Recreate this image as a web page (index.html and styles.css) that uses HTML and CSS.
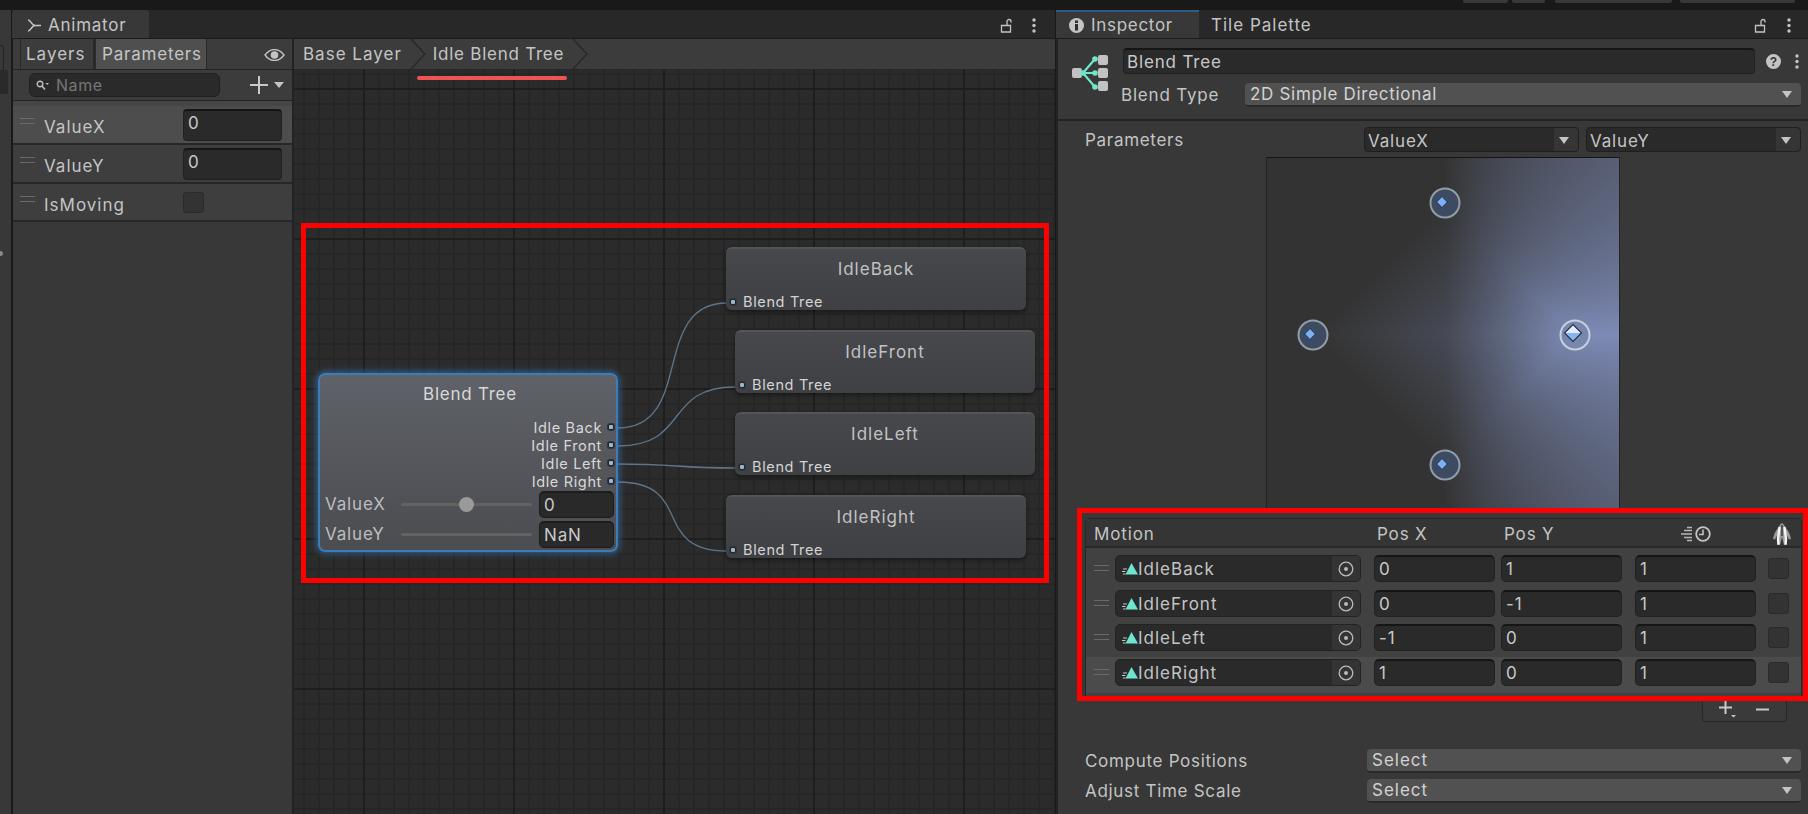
FILE: index.html
```html
<!DOCTYPE html>
<html lang="en">
<head>
<meta charset="utf-8">
<title>Animator and Inspector</title>
<link rel="stylesheet" href="styles.css">
</head>
<body>
<div class="topbar">
  <span class="topbtn w45"></span><span class="topbtn w33"></span><span class="topbtn w117"></span><span class="topbtn w115"></span>
</div>
<div class="workspace">
  <aside class="strip"><span class="strip-pill"></span><span class="strip-dark"></span><span class="strip-dot"></span></aside>

  <section class="animator">
    <div class="tabbar">
      <div class="tab tab-animator">
        <svg class="ic-anim" viewBox="0 0 15 13" width="15" height="13"><path d="M1 1c3 0 3 5 7 5.500h6M1 12c3 0 3-5 7-5.500" fill="none" stroke="#c6c6c6" stroke-width="1.600"/></svg>
        Animator
      </div>
      <div class="tab-tools tools-anim">
        <svg width="12" height="15" viewBox="0 0 12 15"><path d="M1.500 7.500h9v6.500h-9zM7 7.500V3.500a2 2 0 0 1 4 0v1" fill="none" stroke="#c4c4c4" stroke-width="1.300"/></svg>
        <svg width="4" height="15" viewBox="0 0 4 15"><circle cx="2" cy="2" r="1.700" fill="#c4c4c4"/><circle cx="2" cy="7.500" r="1.700" fill="#c4c4c4"/><circle cx="2" cy="13" r="1.700" fill="#c4c4c4"/></svg>
      </div>
    </div>
    <div class="animator-body">
      <div class="params">
        <div class="params-tools">
          <span class="ptab">Layers</span>
          <span class="ptab ptab-on">Parameters</span>
          <svg class="eye" width="21" height="12" viewBox="0 0 21 12"><path d="M1 6c3-4 6-5.500 9.500-5.500S17 2 20 6c-3 4-6 5.500-9.500 5.500S4 10 1 6z" fill="none" stroke="#c4c4c4" stroke-width="1.300"/><circle cx="10.500" cy="6" r="3.800" fill="#c4c4c4"/></svg>
        </div>
        <div class="params-search">
          <div class="search">
            <svg width="13" height="11" viewBox="0 0 13 11"><circle cx="4" cy="4" r="2.800" fill="none" stroke="#bdbdbd" stroke-width="1.400"/><path d="M6 6l3 3.500" stroke="#bdbdbd" stroke-width="1.600"/><path d="M9.500 3h3.500l-1.750 2z" fill="#bdbdbd"/></svg>
            <span>Name</span>
          </div>
          <svg class="plus" width="18" height="18" viewBox="0 0 18 18"><path d="M9 0v18M0 9h18" stroke="#c8c8c8" stroke-width="2"/></svg>
          <span class="caret-s"></span>
        </div>
        <div class="params-gap"></div>
        <div class="param param-on"><span class="handle"></span><span class="param-name">ValueX</span><span class="field param-field">0</span></div>
        <div class="param"><span class="handle"></span><span class="param-name">ValueY</span><span class="field param-field">0</span></div>
        <div class="param"><span class="handle"></span><span class="param-name">IsMoving</span><span class="check param-check"></span></div>
      </div>

      <div class="stage">
        <div class="crumbs">
          <span class="crumb crumb-base">Base Layer</span>
          <svg class="chev" width="16" height="30" viewBox="0 0 16 30"><path d="M1 0l14 15L1 30" fill="none" stroke="#272727" stroke-width="1.300"/></svg>
          <span class="crumb crumb-tree">Idle Blend Tree</span>
          <svg class="chev" width="16" height="30" viewBox="0 0 16 30"><path d="M1 0l14 15L1 30" fill="none" stroke="#272727" stroke-width="1.300"/></svg>
        </div>
        <div class="graph">
          <svg class="wires" viewBox="294 70 761 744" width="761" height="744">
            <g fill="none" stroke="#5f7589" stroke-width="1.300">
              <path d="M618 428C695 428 650 303 727 303"/>
              <path d="M618 446C690 446 663 387 735 387"/>
              <path d="M618 464C680 464 673 468 735 468"/>
              <path d="M618 482C695 482 650 551 727 551"/>
            </g>
          </svg>

          <div class="blend-node">
            <div class="blend-title">Blend Tree</div>
            <div class="outs">
              <div class="out">Idle Back<i class="dot"></i></div>
              <div class="out">Idle Front<i class="dot"></i></div>
              <div class="out">Idle Left<i class="dot"></i></div>
              <div class="out">Idle Right<i class="dot"></i></div>
            </div>
            <div class="slide"><span class="slide-name">ValueX</span><span class="track"><i class="thumb"></i></span><span class="field node-field">0</span></div>
            <div class="slide"><span class="slide-name">ValueY</span><span class="track"></span><span class="field node-field">NaN</span></div>
          </div>

          <div class="clip n-back"><div class="clip-title">IdleBack</div><div class="clip-port"><i class="dot"></i>Blend Tree</div></div>
          <div class="clip n-front"><div class="clip-title">IdleFront</div><div class="clip-port"><i class="dot"></i>Blend Tree</div></div>
          <div class="clip n-left"><div class="clip-title">IdleLeft</div><div class="clip-port"><i class="dot"></i>Blend Tree</div></div>
          <div class="clip n-right"><div class="clip-title">IdleRight</div><div class="clip-port"><i class="dot"></i>Blend Tree</div></div>
        </div>
      </div>
    </div>
  </section>

  <section class="inspector">
    <div class="tabbar">
      <div class="tab tab-inspector">
        <svg width="15" height="15" viewBox="0 0 15 15"><circle cx="7.500" cy="7.500" r="7.500" fill="#c4c4c4"/><rect x="6" y="6" width="3" height="6.500" fill="#2c2c2c"/><rect x="6" y="2.500" width="3" height="2.500" fill="#2c2c2c"/></svg>
        Inspector
      </div>
      <div class="tab tab-plain">Tile Palette</div>
      <div class="tab-tools tools-insp">
        <svg width="12" height="15" viewBox="0 0 12 15"><path d="M1.500 7.500h9v6.500h-9zM7 7.500V3.500a2 2 0 0 1 4 0v1" fill="none" stroke="#c4c4c4" stroke-width="1.300"/></svg>
        <svg width="4" height="15" viewBox="0 0 4 15"><circle cx="2" cy="2" r="1.700" fill="#c4c4c4"/><circle cx="2" cy="7.500" r="1.700" fill="#c4c4c4"/><circle cx="2" cy="13" r="1.700" fill="#c4c4c4"/></svg>
      </div>
    </div>
    <div class="insp-body">
      <div class="insp-head">
        <svg class="tree-icon" width="38" height="38" viewBox="0 0 38 38">
          <g fill="#c2c2c2"><rect x="0" y="14" width="10" height="10" rx="2"/><rect x="26" y="1" width="10" height="10" rx="2"/><rect x="26" y="14" width="10" height="10" rx="2"/><rect x="26" y="27" width="10" height="10" rx="2"/></g>
          <g fill="none" stroke="#383838" stroke-width="5"><path d="M11 19L23 5M11 19H23M11 19L23 33"/></g>
          <g fill="none" stroke="#6fe5c9" stroke-width="2.200"><path d="M11 19L23 5M11 19H23M11 19L23 33"/></g>
          <g fill="#6fe5c9"><circle cx="11" cy="19" r="2.800"/><circle cx="23" cy="5" r="2.800"/><circle cx="23" cy="19" r="2.800"/><circle cx="23" cy="33" r="2.800"/></g>
        </svg>
        <div class="head-rows">
          <div class="name-row">
            <span class="field name-field">Blend Tree</span>
            <svg width="15" height="15" viewBox="0 0 15 15"><circle cx="7.500" cy="7.500" r="7.500" fill="#c4c4c4"/><text x="7.500" y="11.500" text-anchor="middle" class="help-q">?</text></svg>
            <svg width="4" height="15" viewBox="0 0 4 15"><circle cx="2" cy="2" r="1.700" fill="#c4c4c4"/><circle cx="2" cy="7.500" r="1.700" fill="#c4c4c4"/><circle cx="2" cy="13" r="1.700" fill="#c4c4c4"/></svg>
          </div>
          <div class="type-row">
            <span class="type-label">Blend Type</span>
            <span class="select type-select">2D Simple Directional<i class="caret"></i></span>
          </div>
        </div>
      </div>

      <div class="insp-params">
        <span class="ip-label">Parameters</span>
        <span class="select-dark">ValueX<b><i class="caret"></i></b></span>
        <span class="select-dark">ValueY<b><i class="caret"></i></b></span>
      </div>

      <div class="diagram">
        <canvas id="weights" width="352" height="351"></canvas>
        <span class="sample s-top"><i></i></span>
        <span class="sample s-left"><i></i></span>
        <span class="sample s-right sample-on"><i></i></span>
        <span class="sample s-bottom"><i></i></span>
      </div>

      <div class="motion-list">
        <div class="ml-head">
          <span class="c-motion">Motion</span>
          <span class="c-x">Pos X</span>
          <span class="c-y">Pos Y</span>
          <svg class="ic-clock" width="31" height="16" viewBox="0 0 31 16"><g stroke="#b8b8b8" stroke-width="1.300"><path d="M0 8h11M3 4.500h8M3 11.500h8M6 1.500h5M6 14.500h5"/></g><circle cx="22" cy="8" r="6.800" fill="none" stroke="#c4c4c4" stroke-width="1.800"/><path d="M22 3.500V8.500h-4" fill="none" stroke="#c4c4c4" stroke-width="1.600"/></svg>
          <svg class="ic-human" width="20" height="22" viewBox="0 0 20 22"><path d="M10 0c2 1 3 3 3.500 5 2 1 4.500 6 5.500 11l-2 .5c-1-2-2-4-3-5l1 10.500h-3l-2-8-2 8H5l1-10.500c-1 1-2 3-3 5l-2-.5C2 11 4.500 6 6.500 5 7 3 8 1 10 0z" fill="#9a9a9a"/><path d="M7.500 4L6 16l.5 5.500M12.500 4L14 16l-.5 5.500" stroke="#f4f4f4" stroke-width="2.400" fill="none"/><path d="M10 2v11" stroke="#3a3a3a" stroke-width="1.500"/></svg>
        </div>
        <div class="ml-body">
          <div class="ml-row">
            <span class="handle"></span>
            <span class="motion-field"><svg class="ic-motion" width="16" height="12" viewBox="0 0 16 12"><path d="M9.500 0L16 11.500H3.500z" fill="#6fe5d0"/><path d="M1 6h4M0 8.500h3.500M1 11h2.500" stroke="#c4c4c4"/></svg><span class="motion-name">IdleBack</span><span class="picker"><svg width="16" height="16" viewBox="0 0 16 16"><circle cx="8" cy="8" r="6.800" fill="none" stroke="#b9b9b9" stroke-width="1.300"/><circle cx="8" cy="8" r="2" fill="#b9b9b9"/></svg></span></span>
            <span class="field cell">0</span><span class="field cell">1</span><span class="field cell cell-t">1</span><span class="check"></span>
          </div>
          <div class="ml-row">
            <span class="handle"></span>
            <span class="motion-field"><svg class="ic-motion" width="16" height="12" viewBox="0 0 16 12"><path d="M9.500 0L16 11.500H3.500z" fill="#6fe5d0"/><path d="M1 6h4M0 8.500h3.500M1 11h2.500" stroke="#c4c4c4"/></svg><span class="motion-name">IdleFront</span><span class="picker"><svg width="16" height="16" viewBox="0 0 16 16"><circle cx="8" cy="8" r="6.800" fill="none" stroke="#b9b9b9" stroke-width="1.300"/><circle cx="8" cy="8" r="2" fill="#b9b9b9"/></svg></span></span>
            <span class="field cell">0</span><span class="field cell">-1</span><span class="field cell cell-t">1</span><span class="check"></span>
          </div>
          <div class="ml-row">
            <span class="handle"></span>
            <span class="motion-field"><svg class="ic-motion" width="16" height="12" viewBox="0 0 16 12"><path d="M9.500 0L16 11.500H3.500z" fill="#6fe5d0"/><path d="M1 6h4M0 8.500h3.500M1 11h2.500" stroke="#c4c4c4"/></svg><span class="motion-name">IdleLeft</span><span class="picker"><svg width="16" height="16" viewBox="0 0 16 16"><circle cx="8" cy="8" r="6.800" fill="none" stroke="#b9b9b9" stroke-width="1.300"/><circle cx="8" cy="8" r="2" fill="#b9b9b9"/></svg></span></span>
            <span class="field cell">-1</span><span class="field cell">0</span><span class="field cell cell-t">1</span><span class="check"></span>
          </div>
          <div class="ml-row ml-row-on">
            <span class="handle"></span>
            <span class="motion-field"><svg class="ic-motion" width="16" height="12" viewBox="0 0 16 12"><path d="M9.500 0L16 11.500H3.500z" fill="#6fe5d0"/><path d="M1 6h4M0 8.500h3.500M1 11h2.500" stroke="#c4c4c4"/></svg><span class="motion-name">IdleRight</span><span class="picker"><svg width="16" height="16" viewBox="0 0 16 16"><circle cx="8" cy="8" r="6.800" fill="none" stroke="#b9b9b9" stroke-width="1.300"/><circle cx="8" cy="8" r="2" fill="#b9b9b9"/></svg></span></span>
            <span class="field cell">1</span><span class="field cell">0</span><span class="field cell cell-t">1</span><span class="check"></span>
          </div>
        </div>
      </div>
      <div class="ml-foot">
        <svg width="20" height="18" viewBox="0 0 20 18"><path d="M7.500 1v13M1 7.500h13" stroke="#c8c8c8" stroke-width="2"/><path d="M13 15h5l-2.500 2.500z" fill="#c8c8c8"/></svg>
        <svg width="13" height="3" viewBox="0 0 13 3"><path d="M0 1.500h13" stroke="#c8c8c8" stroke-width="2"/></svg>
      </div>

      <div class="action-row"><span class="ip-label">Compute Positions</span><span class="select action-select">Select<i class="caret"></i></span></div>
      <div class="action-row"><span class="ip-label">Adjust Time Scale</span><span class="select action-select">Select<i class="caret"></i></span></div>
    </div>
  </section>
</div>

<div class="mark-line"></div>
<div class="mark-box mark-graph"></div>
<div class="mark-box mark-list"></div>
<script src="blend.js"></script>
</body>
</html>
```

FILE: styles.css
```css
* { box-sizing: border-box; }
html, body { margin: 0; height: 100%; }
body {
  position: relative;
  width: 1808px;
  height: 814px;
  overflow: hidden;
  background: #191919;
  color: #c4c4c4;
  font-family: Inter, "Liberation Sans", sans-serif;
  font-size: 17px;
  letter-spacing: .85px;
}

.topbar { height: 10px; display: flex; justify-content: flex-end; gap: 4px; padding-right: 13px; align-items: flex-start; }
.topbtn { height: 3px; background: #383838; border-radius: 0 0 2px 2px; }
.w45 { width: 45px; } .w33 { width: 33px; margin-right: 6px; } .w117 { width: 117px; margin-right: 4px; } .w115 { width: 115px; }

.workspace { display: flex; height: 804px; }
.strip { width: 11px; position: relative; background: #383838; flex: none; }
.strip-pill { position: absolute; left: -6px; top: 35px; width: 10px; height: 30px; border: 1px solid #232323; border-radius: 3px; }
.strip-dark { position: absolute; left: 0; top: 60px; width: 8px; height: 24px; background: #2a2a2a; }
.strip-dot { position: absolute; left: -2px; top: 241px; width: 5px; height: 5px; border-radius: 50%; background: #8a8a8a; }

.animator { width: 1043px; flex: none; margin-left: 1px; display: flex; flex-direction: column; border-left: 1px solid #191919; }
.inspector { flex: 1; display: flex; flex-direction: column; margin-left: 1px; }

.tabbar { height: 29px; flex: none; display: flex; align-items: stretch; background: #282828; border-bottom: 1px solid #1c1c1c; position: relative; }
.animator .tabbar { margin-left: -1px; }
.tab { display: flex; align-items: center; gap: 6px; padding: 2px 0 0 15px; }
.tab-animator { width: 137px; background: #383838; border-radius: 4px 4px 0 0; letter-spacing: .75px; }
.tab-inspector { width: 143px; padding: 0 0 0 13px; gap: 7px; background: #383838; border-top: 2px solid #2c5d87; letter-spacing: .7px; }
.tab-plain { padding-left: 12px; letter-spacing: 1px; }
.tab-tools { margin-left: auto; display: flex; align-items: center; gap: 20px; padding-top: 2px; }
.tools-anim { padding-right: 19px; }
.tools-insp { padding-right: 17px; gap: 21px; }

.animator-body { flex: 1; display: flex; min-height: 0; }
.params { width: 281px; flex: none; background: #383838; border-right: 2px solid #232323; }
.params-tools { height: 31px; background: #3c3c3c; border-bottom: 1px solid #232323; display: flex; align-items: stretch; padding-left: 7px; position: relative; }
.ptab { display: flex; align-items: center; padding: 0 0 0 5px; height: 30px; letter-spacing: .8px; }
.ptab:first-child { width: 76px; border-left: 1px solid #2a2a2a; border-right: 3px solid #2a2a2a; letter-spacing: 1px; }
.ptab-on { width: 111px; background: #4f4f4f; border-right: 1px solid #2a2a2a; padding-left: 6px; }
.eye { margin: 10px 0 0 57px; }
.params-search { height: 31px; background: #3c3c3c; border-bottom: 1px solid #232323; display: flex; align-items: center; padding-left: 16px; }
.search { width: 191px; height: 24px; background: #2a2a2a; border: 1px solid #202020; border-radius: 6px; display: flex; align-items: center; gap: 7px; padding-left: 6px; color: #777; font-size: 16px; letter-spacing: .55px; }
.plus { margin-left: 30px; }
.caret-s { margin-left: 6px; border-left: 5px solid transparent; border-right: 5px solid transparent; border-top: 6px solid #c4c4c4; }
.params-gap { height: 5px; background: #464646; }
.param { height: 39px; background: #3e3e3e; border-bottom: 2px solid #272727; position: relative; display: flex; align-items: flex-start; letter-spacing: 1px; }
.param:last-child { height: 38px; }
.param-on { background: #4d4d4d; }
.handle { width: 15px; height: 6px; border-top: 1px solid #6a6a6a; border-bottom: 1px solid #6a6a6a; flex: none; }
.param .handle { margin: 12px 0 0 7px; }
.param-name { margin: 11px 0 0 9px; width: 139px; flex: none; }
.field { display: flex; align-items: center; background: #2a2a2a; border: 1px solid #212121; border-top: 2px solid #151515; border-radius: 4px; padding-left: 4px; color: #c8c8c8; }
.param-field { width: 99px; height: 32px; margin-top: 3px; align-items: flex-start; padding-top: 2px; }
.check { width: 21px; height: 21px; background: #333; border: 1px solid #2a2a2a; border-radius: 3px; flex: none; }
.param-check { margin-top: 8px; }

.stage { flex: 1; min-width: 0; display: flex; flex-direction: column; }
.crumbs { height: 31px; flex: none; background: #3c3c3c; border-bottom: 1px solid #272727; display: flex; align-items: center; letter-spacing: 1px; }
.crumb-base { margin-left: 9px; }
.crumb-tree { letter-spacing: .75px; }
.chev { flex: none; margin: 0 7px 0 8px; height: 30px; }
.graph {
  flex: 1;
  position: relative;
  overflow: hidden;
  background-color: #2b2b2b;
  background-image:
    linear-gradient(90deg, #1e1e1e 2px, transparent 2px),
    linear-gradient(0deg, #1e1e1e 2px, transparent 2px),
    linear-gradient(90deg, #262626 2px, transparent 2px),
    linear-gradient(0deg, #262626 2px, transparent 2px);
  background-size: 150px 150px, 150px 150px, 15px 15px, 15px 15px;
  background-position: 69px 0, 0 -130px, 9px 0, 0 -10px;
}
.wires { position: absolute; left: 0; top: 0; }

.dot { width: 6px; height: 6px; background: #9cb6cc; border: 1px solid #1c242c; border-radius: 2px; flex: none; box-shadow: 0 0 0 1px #32363a; }

.blend-node {
  position: absolute; left: 24px; top: 303px; width: 300px; height: 179px;
  border: 2px solid #3c7cb8; border-radius: 7px;
  background: linear-gradient(#5f6268, #505257 70%, #4b4d51);
  box-shadow: 0 0 6px 2px rgba(60, 130, 200, .55);
  padding: 0 1px 0 5px;
}
.blend-title { text-align: center; color: #d8d8d8; margin-top: 7px; height: 33px; line-height: 24px; letter-spacing: .75px; }
.outs { margin-top: 3px; }
.out { height: 18px; display: flex; align-items: center; justify-content: flex-end; gap: 6px; font-size: 14.500px; letter-spacing: .65px; color: #d8d8d8; padding-right: 1px; }
.slide { height: 30px; display: flex; align-items: center; }
.outs + .slide { margin-top: -1px; }
.slide-name { width: 76px; flex: none; color: #bdbdbd; }
.track { width: 131px; height: 3px; background: #626262; position: relative; flex: none; border-radius: 2px; }
.thumb { position: absolute; left: 58px; top: -6px; width: 15px; height: 15px; border-radius: 50%; background: #9a9a9a; }
.node-field { width: 75px; height: 27px; margin-left: 7px; padding-left: 4px; background: #292929; border-color: #1c1c1c; border-radius: 5px; }

.clip {
  position: absolute; width: 300px; height: 63px;
  border-top: 2px solid #535558; border-radius: 6px;
  background: linear-gradient(#46484c, #3e4044);
  box-shadow: 0 2px 4px rgba(0, 0, 0, .45);
  display: flex; flex-direction: column;
  letter-spacing: 1px;
}
.n-back { left: 432px; top: 177px; }
.n-front { left: 441px; top: 260px; }
.n-left { left: 441px; top: 342px; }
.n-right { left: 432px; top: 425px; }
.clip-title { text-align: center; color: #c2c2c2; margin-top: 8px; height: 30px; line-height: 24px; }
.clip-port { display: flex; align-items: center; font-size: 14.500px; letter-spacing: .65px; color: #d4d4d4; margin-top: 6px; padding-left: 4px; gap: 7px; }

.insp-body { flex: 1; background: #383838; border-left: 2px solid #232323; }
.insp-head { height: 82px; display: flex; border-bottom: 2px solid #232323; padding: 9px 9px 0 14px; }
.tree-icon { margin: 6px 11px 0 0; flex: none; }
.head-rows { flex: 1; min-width: 0; }
.name-row { display: flex; align-items: center; gap: 11px; height: 26px; }
.name-row svg:last-child { margin-left: 3px; }
.name-field { margin-left: 2px; flex: 1; height: 26px; padding-left: 3px; }
.help-q { font: bold 12px "Liberation Sans", sans-serif; letter-spacing: 0; fill: #333; }
.type-row { display: flex; align-items: center; margin: 9px -2px 0 0; }
.type-label { width: 124px; flex: none; letter-spacing: .8px; }
.select { display: flex; align-items: center; position: relative; background: #515151; border-bottom: 2px solid #2a2a2a; border-radius: 4px; padding-left: 5px; color: #d2d2d2; }
.type-select { flex: 1; height: 24px; letter-spacing: .7px; }
.caret { position: absolute; right: 9px; top: 50%; margin-top: -3px; border-left: 5px solid transparent; border-right: 5px solid transparent; border-top: 7px solid #c4c4c4; }

.insp-params { display: flex; align-items: center; height: 25px; margin-top: 6px; padding: 0 7px 0 27px; }
.ip-label { width: 279px; flex: none; letter-spacing: .7px; }
.select-dark { position: relative; width: 215px; height: 25px; margin-right: 7px; display: flex; align-items: center; background: #2a2a2a; border: 1px solid #1f1f1f; border-radius: 4px; padding: 2px 0 0 3px; }
.select-dark:last-child { margin-right: 0; }
.select-dark b { position: absolute; right: 0; top: 0; bottom: 0; width: 24px; background: #353535; border-radius: 0 4px 4px 0; }

.diagram { width: 354px; height: 352px; margin: 5px 0 0 208px; position: relative; background: #333; border-top: 1px solid #151515; border-left: 1px solid #232323; border-right: 1px solid #232323; }
#weights { display: block; width: 100%; height: 100%; }
.sample { position: absolute; width: 31px; height: 31px; transform: translate(-50%, -50%); border-radius: 50%; background: #3d4b62; border: 2px solid #949ca8; }
.sample i { position: absolute; left: 6px; top: 8px; width: 9px; height: 9px; transform: rotate(45deg); background: #7cb1f7; border: 1px solid #1f2a3a; }
.s-top { left: 178px; top: 45px; }
.s-left { left: 46px; top: 177px; }
.s-right { left: 308px; top: 177px; }
.s-bottom { left: 178px; top: 307px; }
.sample-on { background: #7787ad; border-color: #c8cfdd; }
.sample-on i { left: 4.500px; top: 5px; width: 13px; height: 13px; background: linear-gradient(135deg, #e2ecfa 50%, #86b5f4 50%); border-color: #1f2a3a; }

.motion-list { margin: 9px 6px 0 27px; height: 179px; border: 1px solid #262626; border-radius: 4px 4px 0 0; background: #3a3a3a; display: flex; flex-direction: column; }
.ml-head { height: 29px; flex: none; background: #353535; border-bottom: 2px solid #282828; display: flex; align-items: center; padding-top: 2px; }
.c-motion { margin-left: 8px; width: 283px; flex: none; }
.c-x { width: 127px; flex: none; }
.c-y { width: 177px; flex: none; }
.ic-clock { flex: none; }
.ic-human { margin-left: 60px; flex: none; }
.ml-body { flex: 1; background: #414141; padding-top: 6px; }
.ml-row { height: 34px; display: flex; align-items: flex-start; padding: 1px 0 0 8px; }
.ml-row:first-child { height: 35px; }
.ml-row-on { background: #4b4b4b; padding-top: 2px; height: 36px; }
.ml-row .handle { margin: 10px 6px 0 0; }
.motion-field { width: 246px; height: 27px; flex: none; display: flex; align-items: center; background: #2a2a2a; border: 1px solid #232323; border-radius: 5px; padding-left: 6px; overflow: hidden; letter-spacing: 1px; }
.ic-motion { flex: none; }
.motion-name { flex: 1; }
.picker { width: 28px; height: 100%; background: #343434; display: flex; align-items: center; justify-content: center; flex: none; }
.cell { width: 121px; height: 27px; margin-left: 6px; border-radius: 5px; }
.ml-row .cell:nth-of-type(3) { margin-left: 13px; }
.cell-t { margin-left: 13px; }
.ml-row .check { margin-left: 12px; margin-top: 3px; }
.ml-foot { width: 85px; height: 25px; margin-left: 644px; background: #3a3a3a; border: 1px solid #272727; border-top: 0; border-radius: 0 0 4px 4px; display: flex; align-items: center; gap: 18px; padding-left: 15px; }
.action-row { display: flex; align-items: center; height: 23px; margin: 0 7px 7px 27px; }
.ml-foot + .action-row { margin-top: 27px; }
.action-select { flex: 1; height: 24px; margin-left: 3px; letter-spacing: 1px; }

.mark-line { position: absolute; left: 417px; top: 76px; width: 150px; height: 4px; background: #f05353; border-radius: 2px; }
.mark-box { position: absolute; border: 5px solid #fe0000; }
.mark-graph { left: 301px; top: 223px; width: 748px; height: 360px; }
.mark-list { left: 1077px; top: 508px; width: 731px; height: 193px; }
```

FILE: blend.js
```js
// Weight of the "right" motion across the 2D Simple Directional blend field.
(function () {
  var canvas = document.getElementById('weights');
  var ctx = canvas.getContext('2d');
  var w = canvas.width, h = canvas.height;
  var img = ctx.createImageData(w, h);
  var cx = 177, cy = 176, unit = 131;
  var base = [51, 51, 51], full = [125, 139, 182];
  for (var py = 0; py < h; py++) {
    for (var px = 0; px < w; px++) {
      var x = (px - cx) / unit, y = Math.abs(py - cy) / unit, t;
      if (x + y <= 1 && x >= 0) t = x + (1 - x - y) / 4;
      else if (x > 0) t = x / (x + y);
      else t = Math.max(0, 1 + x - y) / 4;
      var i = (py * w + px) * 4;
      for (var c = 0; c < 3; c++) img.data[i + c] = base[c] + (full[c] - base[c]) * t;
      img.data[i + 3] = 255;
    }
  }
  ctx.putImageData(img, 0, 0);
})();
```
